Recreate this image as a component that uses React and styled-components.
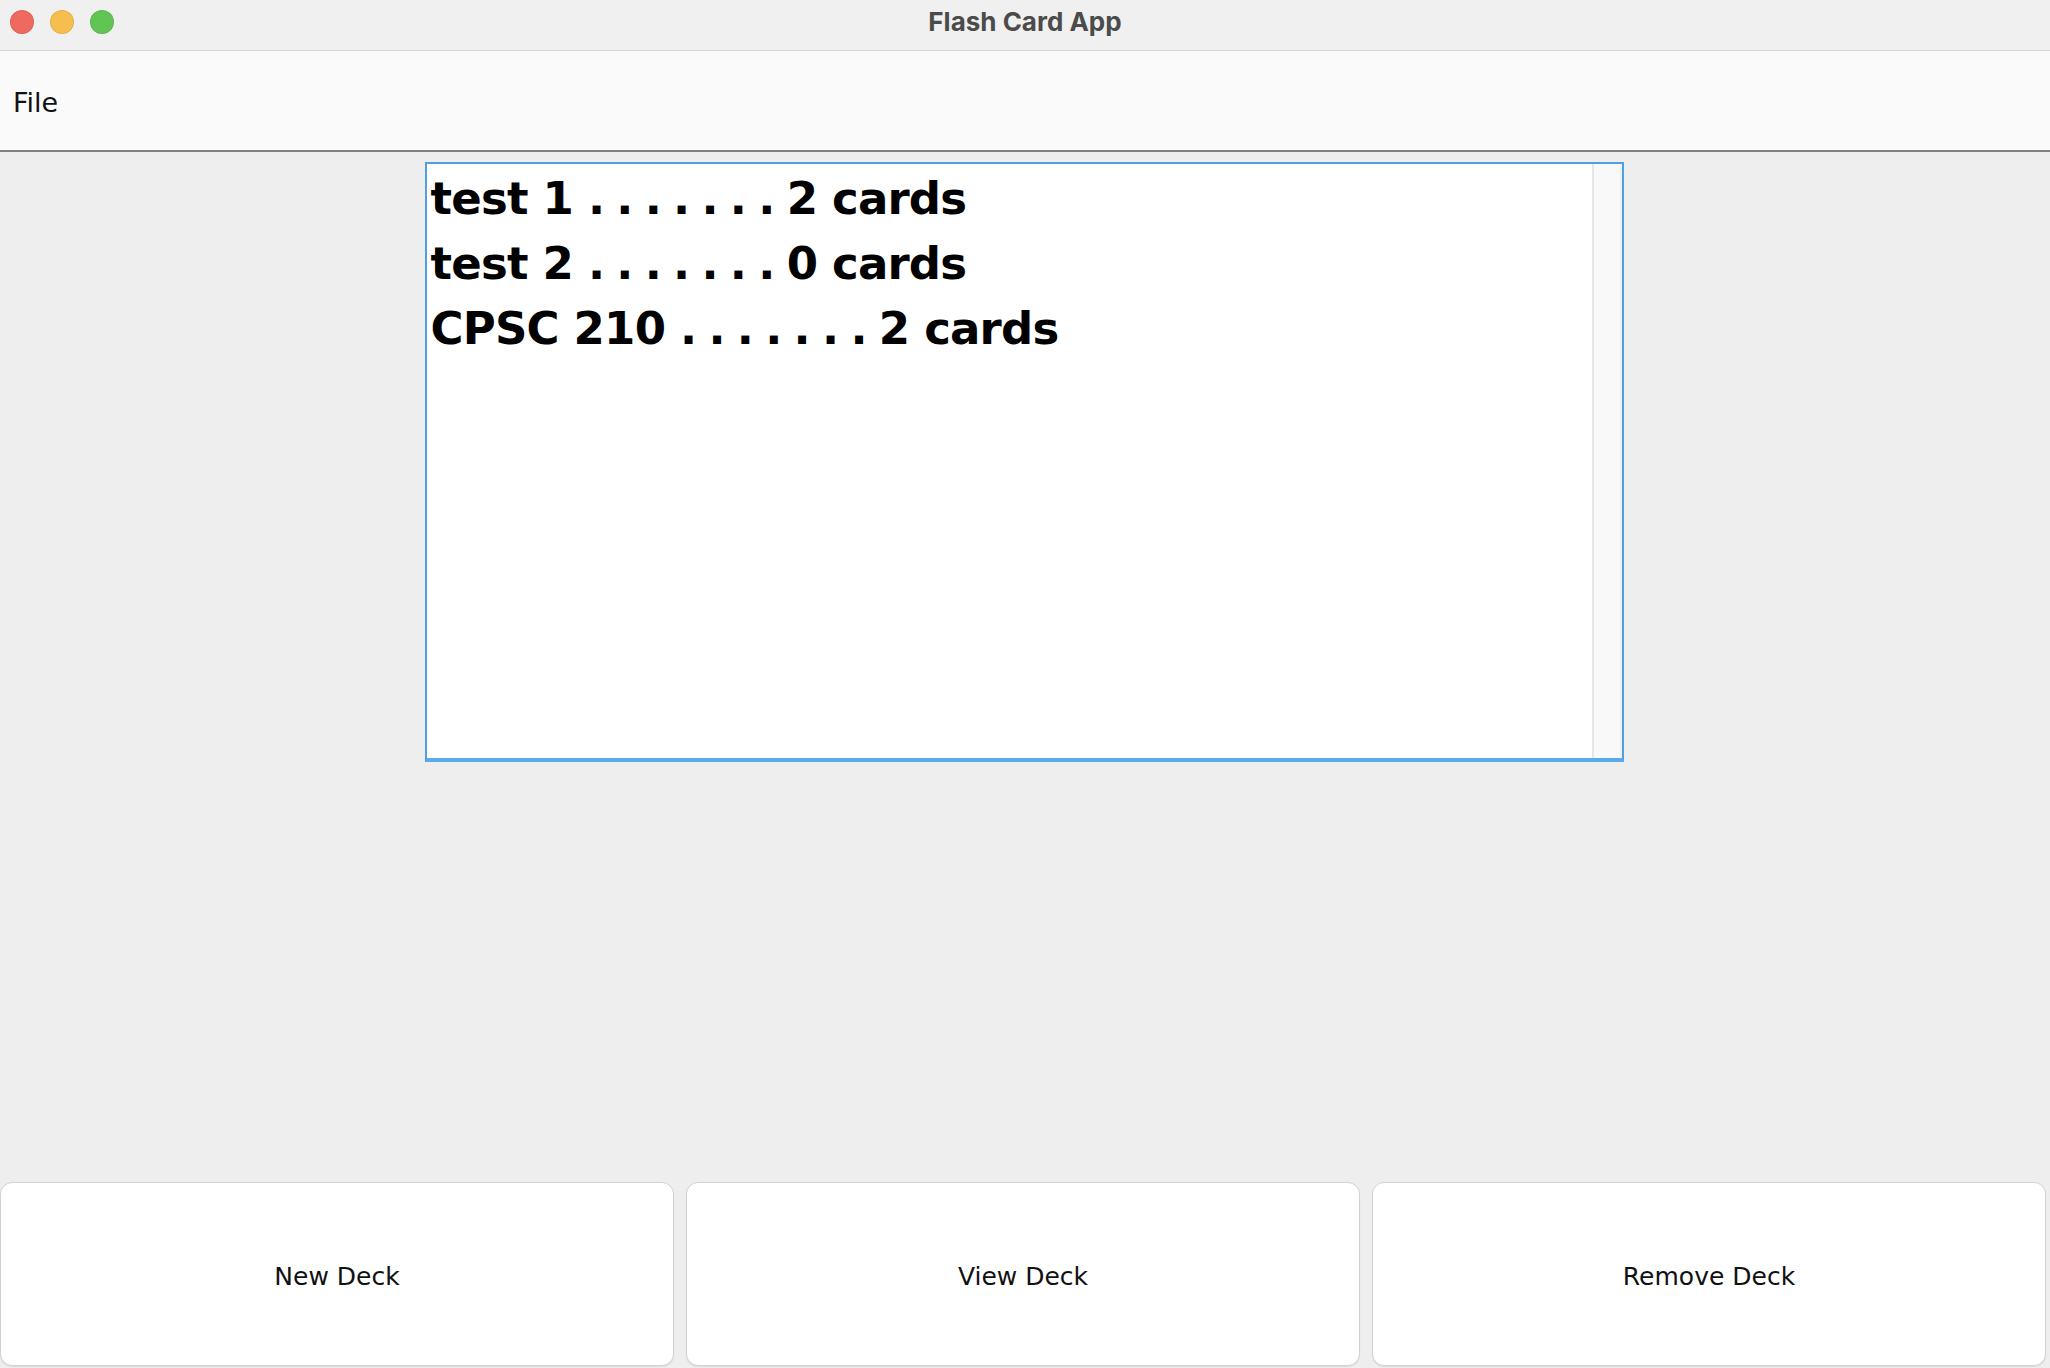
import styled, { createGlobalStyle } from 'styled-components';

const GlobalStyle = createGlobalStyle`
    html, body {
        margin: 0;
        padding: 0;
        height: 100%;
        overflow: hidden;
    }
    #root {
        height: 100%;
    }
`;

const Window = styled.div`
    display: flex;
    flex-direction: column;
    height: 100vh;
    background: #eeeeee;
    font-family: "DejaVu Sans", "Liberation Sans", sans-serif;
`;

const TitleBar = styled.div`
    position: relative;
    height: 50px;
    flex-shrink: 0;
    display: flex;
    align-items: center;
    justify-content: center;
    background: #f0f0f0;
    border-bottom: 1px solid #d6d6d6;
`;

const Lights = styled.div`
    position: absolute;
    left: 10px;
    top: 10px;
    display: flex;
    gap: 16px;
`;

const Light = styled.span`
    width: 24px;
    height: 24px;
    border-radius: 50%;
    box-sizing: border-box;
    background: ${({ color }) => {
        switch (color) {
            case 'red':
                return '#ee6a5f';
            case 'yellow':
                return '#f5be4f';
            case 'green':
                return '#61c554';
            default:
                return '#ccc';
        }
    }};
    border: 1px solid rgba(0, 0, 0, 0.08);
`;

const Title = styled.div`
    font-family: Inter, "Liberation Sans", sans-serif;
    font-weight: 700;
    font-size: 26px;
    color: #4b4b4b;
    margin-top: -7px;
`;

const MenuBar = styled.div`
    height: 99px;
    flex-shrink: 0;
    display: flex;
    align-items: center;
    padding-left: 13px;
    background: #fafafa;
    border-bottom: 2px solid #808080;
`;

const MenuItem = styled.span`
    font-size: 27px;
    color: #111;
    padding-top: 4px;
`;

const Content = styled.div`
    flex: 1;
    display: flex;
    flex-direction: column;
    align-items: center;
    padding-top: 10px;
`;

const ListBox = styled.div`
    width: 1199px;
    height: 600px;
    box-sizing: border-box;
    display: flex;
    margin-left: -2px;
    background: #fff;
    border: 2px solid #4f9fe3;
    border-bottom: 4px solid #5aaaf0;
`;

const List = styled.div`
    flex: 1;
    padding: 2px 0 0 4px;
`;

const Row = styled.div`
    font-family: "DejaVu Sans", sans-serif;
    font-weight: 700;
    font-size: 45px;
    line-height: 65px;
    color: #000;
    white-space: pre;
    letter-spacing: -0.8px;
`;

const Dots = styled.span`
    letter-spacing: 11.3px;
`;

const ScrollTrack = styled.div`
    width: 26px;
    background: #f9f9f9;
    border-left: 2px solid #e6e6e6;
    border-right: 2px solid #f0f0f0;
`;

const ButtonRow = styled.div`
    flex-shrink: 0;
    display: flex;
    gap: 12px;
    padding: 0 4px 2px 0;
`;

const Button = styled.button`
    flex: 1;
    height: 184px;
    padding-top: 6px;
    background: #fff;
    border: 1px solid #d2d2d2;
    border-radius: 12px;
    box-shadow: 0 1px 1px rgba(0, 0, 0, 0.08);
    font-family: "DejaVu Sans", sans-serif;
    font-size: 25px;
    color: #111;
    cursor: pointer;
`;

const decks = [
    { name: 'test 1', count: 2 },
    { name: 'test 2', count: 0 },
    { name: 'CPSC 210', count: 2 },
];

export default function App() {
    return (
        <>
            <GlobalStyle />
            <Window>
                <TitleBar>
                    <Lights>
                        <Light color="red" />
                        <Light color="yellow" />
                        <Light color="green" />
                    </Lights>
                    <Title>Flash Card App</Title>
                </TitleBar>
                <MenuBar>
                    <MenuItem>File</MenuItem>
                </MenuBar>
                <Content>
                    <ListBox>
                        <List>
                            {decks.map((deck) => (
                                <Row key={deck.name}>
                                    {deck.name} <Dots>.......</Dots>{deck.count} cards
                                </Row>
                            ))}
                        </List>
                        <ScrollTrack />
                    </ListBox>
                </Content>
                <ButtonRow>
                    <Button>New Deck</Button>
                    <Button>View Deck</Button>
                    <Button>Remove Deck</Button>
                </ButtonRow>
            </Window>
        </>
    );
}
